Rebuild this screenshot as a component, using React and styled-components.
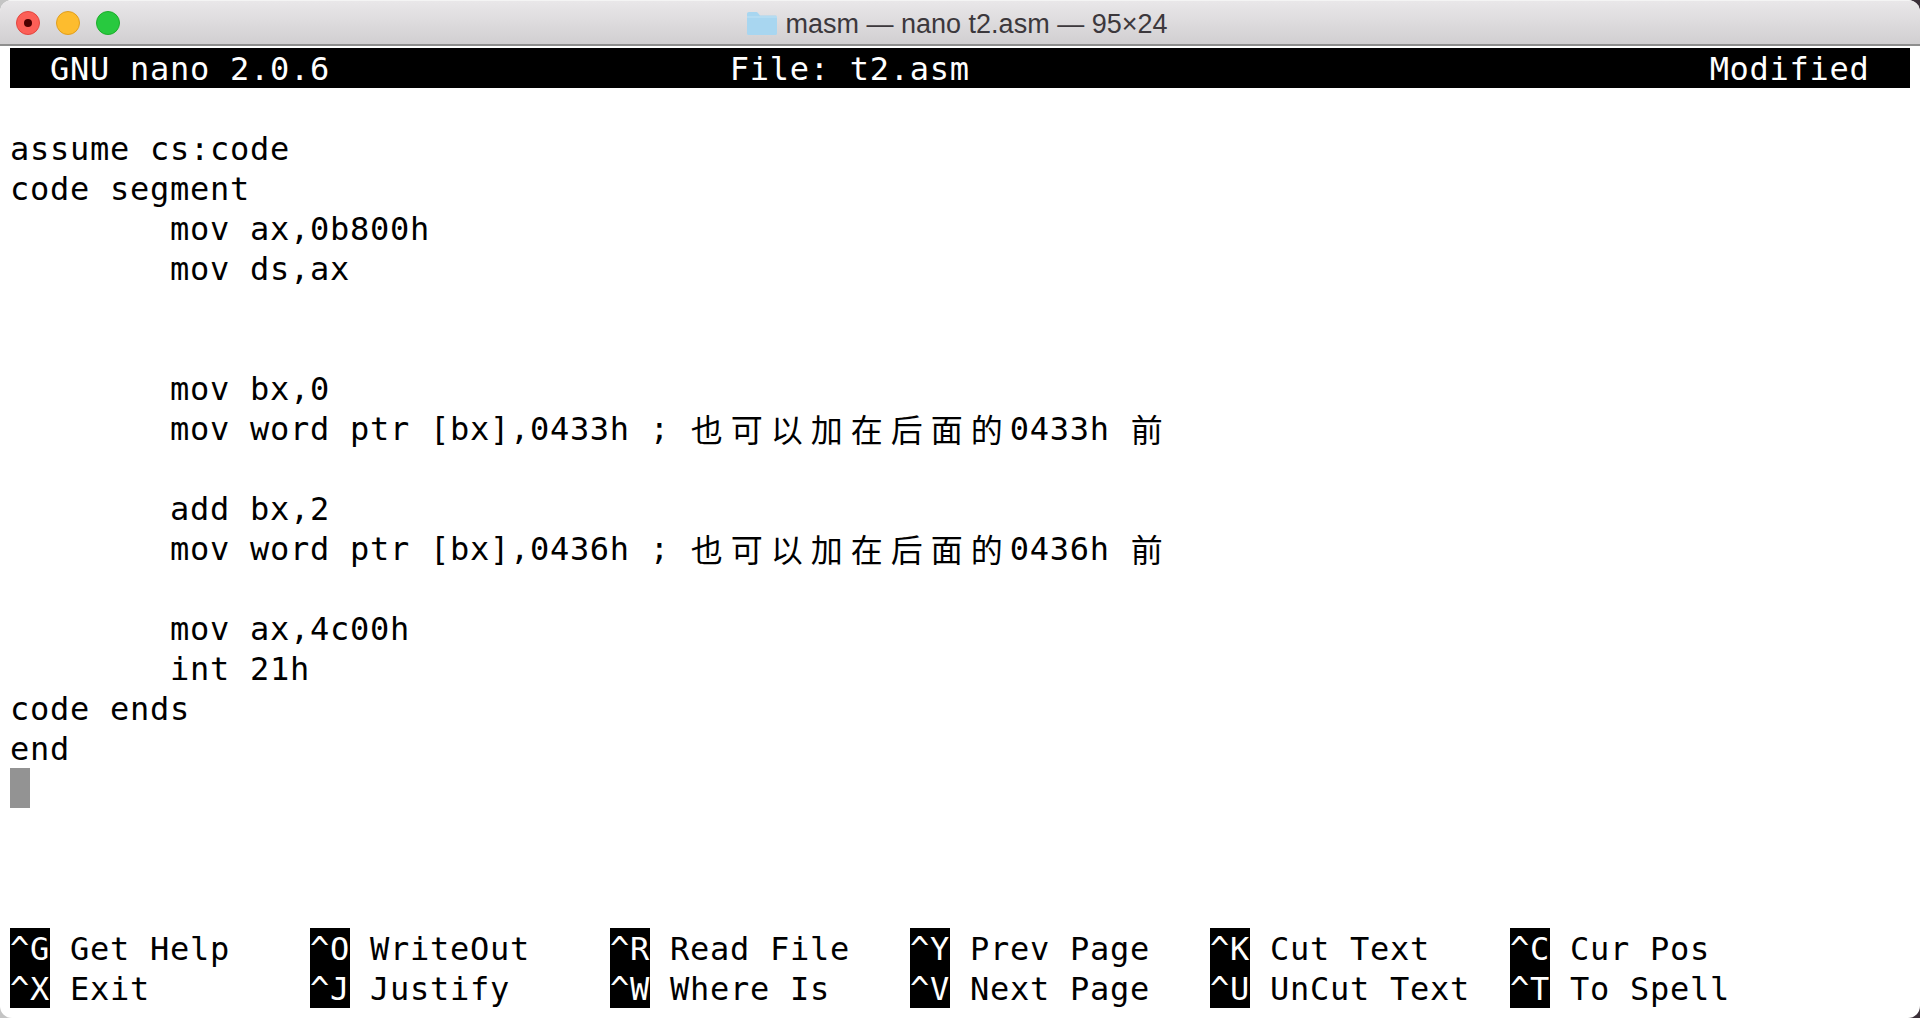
import styled, { createGlobalStyle } from "styled-components";

const GlobalStyle = createGlobalStyle`
	html, body {
		margin: 0;
		padding: 0;
		background: linear-gradient(to right, #c4c4c4 50%, #3b3039 50%);
	}
`;

const Window = styled.div`
	width: 1920px;
	height: 1018px;
	overflow: hidden;
	background: #fff;
	border-radius: 12px;
	display: flex;
	flex-direction: column;
`;
const TitleBar = styled.div`
	height: 43px;
	flex: none;
	display: flex;
	align-items: center;
	padding: 0 16px;
	background: linear-gradient(#e9e7e9, #d1cfd1);
	border-top: 1px solid #f4f4f4;
	border-bottom: 2px solid #8e8e8e;
`;
const Lights = styled.div`
	display: flex;
	gap: 16px;
`;
const Light = styled.div`
	width: 22px;
	height: 22px;
	border-radius: 50%;
	border: 1px solid ${(props) => props.edge};
	background: ${(props) => props.color};
	display: flex;
	align-items: center;
	justify-content: center;
`;
const CloseDot = styled.div`
	width: 8px;
	height: 8px;
	border-radius: 50%;
	background: #4d0000;
`;
const Title = styled.div`
	flex: 1;
	display: flex;
	align-items: center;
	justify-content: center;
	gap: 9px;
	padding-right: 110px;
	font-family: "Liberation Sans", Arial, sans-serif;
	font-size: 27px;
	line-height: 32px;
	padding-top: 2px;
	color: #3c383c;
`;
const Terminal = styled.div`
	margin-top: 2px;
	padding: 0 10px;
	font-family: "DejaVu Sans Mono", "Noto Sans CJK SC", monospace;
	font-size: 32px;
	letter-spacing: 0.73px;
	line-height: 42px;
	color: #000;
`;
const Line = styled.div`
	height: 40px;
	white-space: pre;
`;
const StatusLine = styled(Line)`
	background: #000;
	color: #fff;
`;
const Cjk = styled.span`
	display: inline-block;
	width: 40px;
	height: 40px;
	padding-left: 1px;
	box-sizing: border-box;
	vertical-align: top;
	font-family: "Noto Sans CJK SC", sans-serif;
	font-size: 32px;
	line-height: 40px;
	letter-spacing: 0;
`;
const Cursor = styled.div`
	width: 20px;
	height: 40px;
	background: #939393;
`;
const Shortcuts = styled.div`
	display: grid;
	grid-template-rows: repeat(2, 40px);
	grid-auto-columns: 300px;
	grid-auto-flow: column;
	margin-top: 120px;
`;
const Shortcut = styled.div`
	display: flex;
	white-space: pre;
`;
const Key = styled.span`
	width: 40px;
	background: #000;
	color: #fff;
	margin-right: 20px;
`;

const FolderIcon = () => (
	<svg width="30" height="23" viewBox="0 0 30 23">
		<path
			d="M0 2C0 .8.8 0 2 0h7c1 0 1.6.4 2.2 1.2L13 3.5h15.4c1 0 1.6.6 1.6 1.6V21.5c0 .9-.6 1.5-1.5 1.5h-27C.6 23 0 22.4 0 21.5z"
			fill="#a8d6f0"
		/>
		<path d="M0 4.5h30v1H0z" fill="#c0e2f5" />
	</svg>
);

const code = [
	"",
	"assume cs:code",
	"code segment",
	"        mov ax,0b800h",
	"        mov ds,ax",
	"",
	"",
	"        mov bx,0",
	["        mov word ptr [bx],0433h ; ", "也可以加在后面的", "0433h ", "前"],
	"",
	"        add bx,2",
	["        mov word ptr [bx],0436h ; ", "也可以加在后面的", "0436h ", "前"],
	"",
	"        mov ax,4c00h",
	"        int 21h",
	"code ends",
	"end",
];

const shortcuts = [
	["^G", "Get Help"],
	["^X", "Exit"],
	["^O", "WriteOut"],
	["^J", "Justify"],
	["^R", "Read File"],
	["^W", "Where Is"],
	["^Y", "Prev Page"],
	["^V", "Next Page"],
	["^K", "Cut Text"],
	["^U", "UnCut Text"],
	["^C", "Cur Pos"],
	["^T", "To Spell"],
];

const renderLine = (line) => {
	if (typeof line === "string") return line;
	return line.map((part, i) =>
		i % 2 === 0 ? (
			part
		) : (
			<span key={i}>
				{[...part].map((ch, j) => (
					<Cjk key={j}>{ch}</Cjk>
				))}
			</span>
		)
	);
};

const statusText =
	"  GNU nano 2.0.6".padEnd(36) + "File: t2.asm".padEnd(49) + "Modified";

const App = () => {
	return (
		<Window>
			<GlobalStyle />
			<TitleBar>
				<Lights>
					<Light color="#fc5f57" edge="#e2463f">
						<CloseDot />
					</Light>
					<Light color="#fdbc2e" edge="#e09e1e" />
					<Light color="#28c93f" edge="#1dad2b" />
				</Lights>
				<Title>
					<FolderIcon />
					masm — nano t2.asm — 95×24
				</Title>
			</TitleBar>
			<Terminal>
				<StatusLine>{statusText}</StatusLine>
				{code.map((line, i) => (
					<Line key={i}>{renderLine(line)}</Line>
				))}
				<Cursor />
				<Shortcuts>
					{shortcuts.map(([key, label]) => (
						<Shortcut key={key}>
							<Key>{key}</Key>
							{label}
						</Shortcut>
					))}
				</Shortcuts>
			</Terminal>
		</Window>
	);
};
export default App;
